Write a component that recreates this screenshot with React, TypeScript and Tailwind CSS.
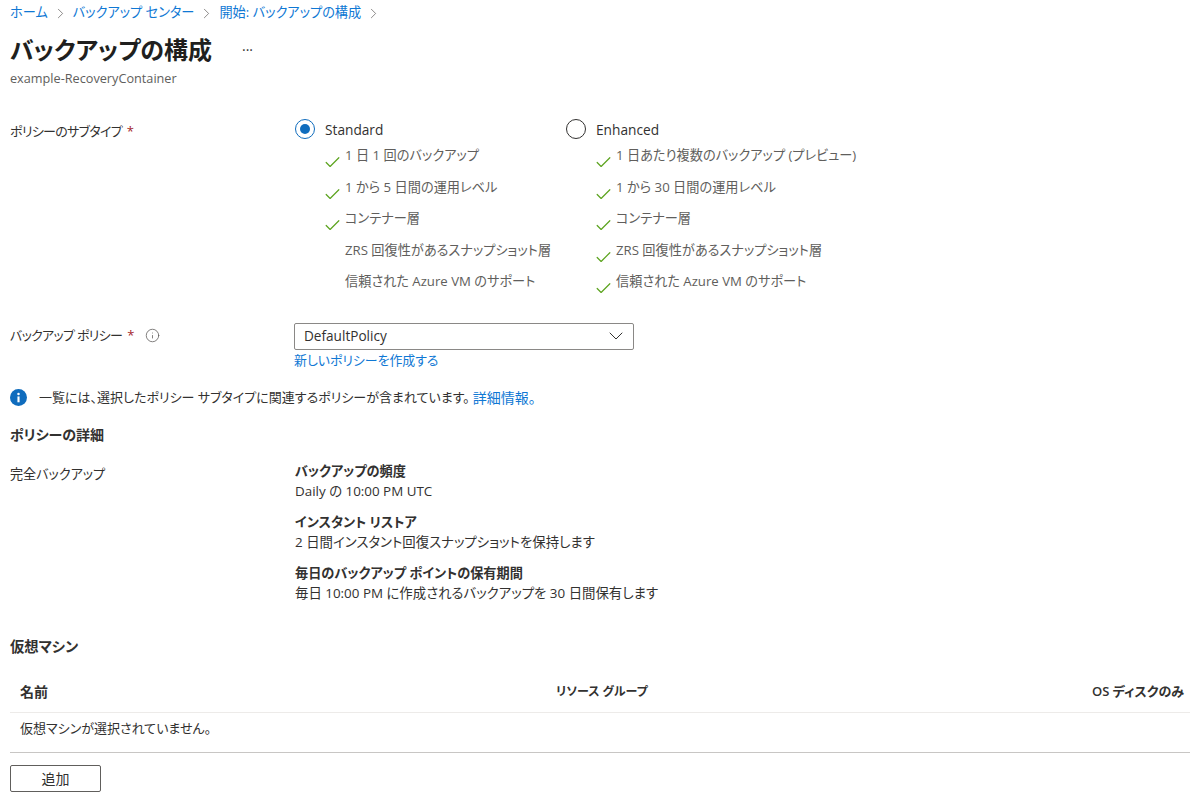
import { ChevronRight, ChevronDown, Check, Info } from 'lucide-react'

const font = { fontFamily: '"Open Sans", "Noto Sans CJK JP", sans-serif' }

function Crumb({ label }: { label: string }) {
  return (
    <>
      <a className="text-[#0f78d4]">{label}</a>
      <ChevronRight className="w-[17px] h-[17px] mx-[4px] text-[#605e5c]" strokeWidth={1} />
    </>
  )
}

function Feature({ label, checked }: { label: string; checked: boolean }) {
  return (
    <div className="flex h-[31.5px] items-start">
      <div className="w-[20px] shrink-0 pt-[8px]">
        {checked && <Check className="w-[19px] h-[19px] -ml-[2px] text-[#5ba31d]" strokeWidth={1.5} />}
      </div>
      <span className="text-[13.2px] leading-[20px] text-[#605e5c] whitespace-nowrap">{label}</span>
    </div>
  )
}

function Radio({ selected, label }: { selected: boolean; label: string }) {
  return (
    <div className="flex items-center h-[20px]">
      {selected ? (
        <div className="w-[20px] h-[20px] rounded-full border border-[#0f6cbd] flex items-center justify-center">
          <div className="w-[10px] h-[10px] rounded-full bg-[#0f6cbd]" />
        </div>
      ) : (
        <div className="w-[20px] h-[20px] rounded-full border border-[#323130]" />
      )}
      <span className="ml-[10px] pt-[3px] text-[13.7px] text-[#323130]">{label}</span>
    </div>
  )
}

function PolicyDetail({ title, text }: { title: string; text: string }) {
  return (
    <div className="h-[51px]">
      <div className="text-[13.2px] leading-[20px] font-semibold text-[#323130]">{title}</div>
      <div className="text-[13.4px] leading-[20px] text-[#323130]">{text}</div>
    </div>
  )
}

export default function App() {
  const standard = [
    { label: '1 日 1 回のバックアップ', checked: true },
    { label: '1 から 5 日間の運用レベル', checked: true },
    { label: 'コンテナー層', checked: true },
    { label: 'ZRS 回復性があるスナップショット層', checked: false },
    { label: '信頼された Azure VM のサポート', checked: false },
  ]
  const enhanced = [
    { label: '1 日あたり複数のバックアップ (プレビュー)', checked: true },
    { label: '1 から 30 日間の運用レベル', checked: true },
    { label: 'コンテナー層', checked: true },
    { label: 'ZRS 回復性があるスナップショット層', checked: true },
    { label: '信頼された Azure VM のサポート', checked: true },
  ]

  return (
    <div className="h-[799px] w-[1200px] overflow-hidden bg-white px-[10px] text-[#323130] [font-feature-settings:'palt']" style={font}>
      {/* Breadcrumb */}
      <div className="flex items-center h-[26px] text-[13.2px] whitespace-nowrap">
        <Crumb label="ホーム" />
        <Crumb label="バックアップ センター" />
        <Crumb label="開始: バックアップの構成" />
      </div>

      {/* Title */}
      <div className="flex items-center h-[48px]">
        <h1 className="text-[24px] leading-[32px] font-semibold text-[#201f1e]">バックアップの構成</h1>
        <span className="ml-[30px] text-[14px] text-[#323130] -mt-[1px]">···</span>
      </div>
      <div className="text-[12.7px] leading-[16px] text-[#605e5c] -mt-[4px]">example-RecoveryContainer</div>

      {/* Policy subtype */}
      <div className="flex mt-[33px]">
        <div className="w-[285px] text-[13px] tracking-[-0.7px] leading-[20px] pt-[2px]">
          ポリシーのサブタイプ <span className="ml-[2px] text-[#a4262c]">*</span>
        </div>
        <div className="w-[271px]">
          <Radio selected label="Standard" />
          <div className="pl-[30px] mt-[6px]">
            {standard.map((f) => <Feature key={f.label} {...f} />)}
          </div>
        </div>
        <div>
          <Radio selected={false} label="Enhanced" />
          <div className="pl-[30px] mt-[6px]">
            {enhanced.map((f) => <Feature key={f.label} {...f} />)}
          </div>
        </div>
      </div>

      {/* Backup policy */}
      <div className="flex mt-[20px]">
        <div className="w-[285px] flex items-center h-[26px] text-[13px] tracking-[-0.7px]">
          バックアップ ポリシー <span className="ml-[5px] text-[#a4262c]">*</span>
          <Info className="ml-[11px] w-[15px] h-[15px] text-[#605e5c]" strokeWidth={1.25} />
        </div>
        <div className="w-[340px] -ml-[1px]">
          <div className="flex items-center justify-between h-[27px] border border-[#8a8886] rounded-[2px] pl-[9px] pr-[5px] text-[13.6px]">
            DefaultPolicy
            <ChevronDown className="w-[24px] h-[24px] text-[#323130]" strokeWidth={1} />
          </div>
          <a className="block text-[12.9px] leading-[20px] text-[#0f78d4]">新しいポリシーを作成する</a>
        </div>
      </div>

      {/* Info */}
      <div className="flex items-center mt-[18px] h-[20px] text-[13px]">
        <svg viewBox="0 0 16 16" className="w-[17px] h-[17px] shrink-0">
          <circle cx="8" cy="8" r="8" fill="#0f6cbd" />
          <rect x="7" y="7" width="2" height="5.5" fill="#fff" />
          <circle cx="8" cy="4.7" r="1.2" fill="#fff" />
        </svg>
        <span className="ml-[12px]">一覧には、選択したポリシー サブタイプに関連するポリシーが含まれています。</span>
        <a className="ml-[3px] text-[14px] text-[#0f78d4]">詳細情報。</a>
      </div>

      <h2 className="mt-[17px] text-[14px] leading-[20px] font-semibold">ポリシーの詳細</h2>

      {/* Policy details */}
      <div className="flex mt-[16px]">
        <div className="w-[285px] pt-[3px] text-[13.1px] leading-[20px] text-[#323130]">完全バックアップ</div>
        <div>
          <PolicyDetail title="バックアップの頻度" text="Daily の 10:00 PM UTC" />
          <PolicyDetail title="インスタント リストア" text="2 日間インスタント回復スナップショットを保持します" />
          <PolicyDetail title="毎日のバックアップ ポイントの保有期間" text="毎日 10:00 PM に作成されるバックアップを 30 日間保有します" />
        </div>
      </div>

      <h2 className="mt-[23px] text-[14.3px] leading-[20px] font-semibold">仮想マシン</h2>

      {/* Table */}
      <div className="mt-[21px]">
        <div className="grid grid-cols-[536px_1fr_auto] items-center h-[35px] pl-[10px] pr-[6px] pb-[6px] text-[12px] font-semibold border-b border-[#edebe9]">
          <div className="text-[14px]">名前</div>
          <div>リソース グループ</div>
          <div className="text-[13px]">OS ディスクのみ</div>
        </div>
        <div className="flex items-center h-[40px] px-[10px] pb-[6px] text-[13px] text-[#323130] border-b border-[#c8c6c4]">
          仮想マシンが選択されていません。
        </div>
      </div>

      <button className="block mt-[12px] w-[91px] h-[27px] border border-[#605e5c] rounded-[2px] text-[14px] text-[#323130] bg-white">
        追加
      </button>
    </div>
  )
}
